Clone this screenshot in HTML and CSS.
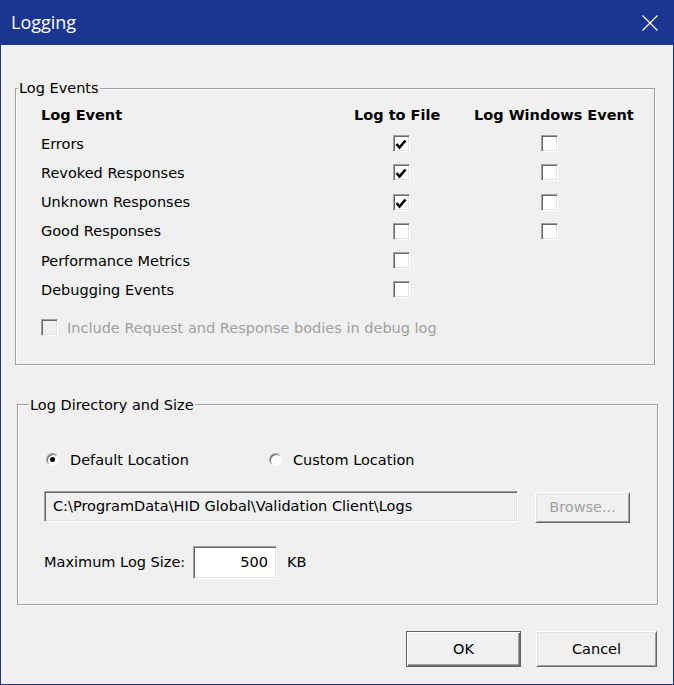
FILE: index.html
```html
<!DOCTYPE html>
<html>
<head>
    <title>Logging</title>
    <link rel="stylesheet" href="styles.css">
</head>
<body>
    <div class="window">
        <div class="titlebar">
            <span class="title">Logging</span>
            <svg class="close" width="16" height="16" viewBox="0 0 16 16">
                <path d="M0.5 0.5 L15.5 15.5 M15.5 0.5 L0.5 15.5" stroke="#fff" stroke-width="1.2" fill="none"/>
            </svg>
        </div>
        <div class="dialog">
            <!-- Log Events group -->
            <fieldset class="group events">
                <legend>Log Events</legend>
                <div class="event-grid">
                    <div class="head">Log Event</div>
                    <div class="head">Log to File</div>
                    <div class="head">Log Windows Event</div>

                    <div>Errors</div>
                    <div class="col-file"><span class="check"><svg width="15" height="15" viewBox="0 0 15 15"><path d="M2.5 7 L5.5 10.5 L11.5 3.5" stroke="#000" stroke-width="2.6" fill="none"/></svg></span></div>
                    <div class="col-win"><span class="check"></span></div>

                    <div>Revoked Responses</div>
                    <div class="col-file"><span class="check"><svg width="15" height="15" viewBox="0 0 15 15"><path d="M2.5 7 L5.5 10.5 L11.5 3.5" stroke="#000" stroke-width="2.6" fill="none"/></svg></span></div>
                    <div class="col-win"><span class="check"></span></div>

                    <div>Unknown Responses</div>
                    <div class="col-file"><span class="check"><svg width="15" height="15" viewBox="0 0 15 15"><path d="M2.5 7 L5.5 10.5 L11.5 3.5" stroke="#000" stroke-width="2.6" fill="none"/></svg></span></div>
                    <div class="col-win"><span class="check"></span></div>

                    <div>Good Responses</div>
                    <div class="col-file"><span class="check"></span></div>
                    <div class="col-win"><span class="check"></span></div>

                    <div>Performance Metrics</div>
                    <div class="col-file"><span class="check"></span></div>
                    <div></div>

                    <div>Debugging Events</div>
                    <div class="col-file"><span class="check"></span></div>
                    <div></div>
                </div>
                <div class="debug-row">
                    <span class="check disabled"></span>
                    <span class="muted">Include Request and Response bodies in debug log</span>
                </div>
            </fieldset>

            <!-- Log Directory group -->
            <fieldset class="group directory">
                <legend>Log Directory and Size</legend>
                <div class="radio-row">
                    <div class="radio-item default"><span class="radio on"></span>Default Location</div>
                    <div class="radio-item"><span class="radio"></span>Custom Location</div>
                </div>
                <div class="path-row">
                    <div class="path-field">C:\ProgramData\HID Global\Validation Client\Logs</div>
                    <div class="btn browse">Browse...</div>
                </div>
                <div class="size-row">
                    <span class="size-label">Maximum Log Size:</span>
                    <div class="size-field">500</div>
                    <span class="unit">KB</span>
                </div>
            </fieldset>

            <div class="buttons">
                <div class="btn ok">OK</div>
                <div class="btn cancel">Cancel</div>
            </div>
        </div>
    </div>
</body>
</html>
```

FILE: styles.css
```css
body {
    margin: 0;
    background-color: #f0f0f0;
    font-family: "DejaVu Sans", sans-serif;
    font-size: 14.5px;
    color: #000;
}
.window {
    width: 674px;
    height: 685px;
}
.titlebar {
    height: 45px;
    background-color: #1b3691;
    display: flex;
    align-items: center;
    padding: 0 16px 0 11px;
    box-sizing: border-box;
}
.title {
    flex: 1;
    color: #fff;
    font-family: "Open Sans", sans-serif;
    font-size: 18px;
    margin-top: -1px;
}
.close {
    display: block;
}
.dialog {
    height: 640px;
    border: 1px solid #1b3691;
    border-top: none;
    box-sizing: border-box;
    overflow: hidden;
}
.group {
    margin: 0;
    padding: 0;
    border: 1px solid #a0a0a0;
    box-shadow: inset 1px 1px #fff, 1px 1px #fff;
    min-inline-size: 0;
}
.group legend {
    line-height: 18px;
    padding: 0 1px;
    background-color: #f0f0f0;
}
.events {
    margin: 34px 18px 0 14px;
    padding: 3px 0 21px 25px;
}
.events legend {
    margin-left: -23px;
}
.event-grid {
    display: grid;
    grid-template-columns: 313px 120px 1fr;
    grid-auto-rows: 29.2px;
    align-items: center;
}
.head {
    font-weight: bold;
}
.col-file .check {
    margin-left: 39px;
}
.col-win .check {
    margin-left: 67px;
}
.check {
    display: block;
    width: 17px;
    height: 17px;
    box-sizing: border-box;
    background-color: #fff;
    border: 1px solid;
    border-color: #a0a0a0 #fff #fff #a0a0a0;
    box-shadow: inset 1px 1px #696969, inset -1px -1px #e3e3e3;
}
.check svg {
    display: block;
    margin: 1px 0 0 0;
}
.check.disabled {
    background-color: #f0f0f0;
}
.debug-row {
    display: flex;
    align-items: center;
    height: 29.2px;
    margin-top: 9px;
}
.muted {
    color: #a0a0a0;
    margin-left: 9px;
}
.directory {
    margin: 31px 15px 0 16px;
    padding: 36px 0 25px 26px;
}
.directory legend {
    margin-left: -15px;
}
.radio-row {
    display: flex;
    align-items: center;
    height: 20px;
    margin-left: 2px;
}
.radio-item {
    display: flex;
    align-items: center;
}
.radio-item.default {
    width: 223px;
}
.radio {
    width: 13px;
    height: 13px;
    box-sizing: border-box;
    border-radius: 50%;
    background-color: #fff;
    border: 1px solid;
    border-color: #a0a0a0 #fff #fff #a0a0a0;
    box-shadow: inset 1px 1px #696969;
    margin-right: 11px;
    display: flex;
    align-items: center;
    justify-content: center;
}
.radio.on::after {
    content: "";
    width: 5px;
    height: 5px;
    border-radius: 50%;
    background-color: #000;
}
.path-row {
    display: flex;
    margin-top: 21px;
}
.path-field {
    width: 474px;
    height: 31px;
    box-sizing: border-box;
    padding-left: 8px;
    line-height: 29px;
    border: 1px solid;
    border-color: #a0a0a0 #fff #fff #a0a0a0;
    box-shadow: inset 1px 1px #696969, inset -1px -1px #e3e3e3;
    white-space: nowrap;
}
.btn {
    box-sizing: border-box;
    text-align: center;
    background-color: #f0f0f0;
    border: 1px solid;
    border-color: #fff #696969 #696969 #fff;
    box-shadow: inset 1px 1px #e3e3e3, inset -1px -1px #a0a0a0;
}
.browse {
    width: 95px;
    height: 31px;
    line-height: 29px;
    margin: 1px 0 0 17px;
    color: #a0a0a0;
}
.size-row {
    display: flex;
    align-items: center;
    margin-top: 23px;
}
.size-label {
    width: 149px;
}
.size-field {
    width: 84px;
    height: 33px;
    box-sizing: border-box;
    line-height: 30px;
    text-align: right;
    padding-right: 8px;
    background-color: #fff;
    border: 1px solid;
    border-color: #a0a0a0 #fff #fff #a0a0a0;
    box-shadow: inset 1px 1px #696969, inset -1px -1px #e3e3e3;
}
.unit {
    margin-left: 10px;
}
.buttons {
    display: flex;
    justify-content: flex-end;
    gap: 15px;
    margin: 26px 16px 0 0;
}
.buttons .btn {
    height: 36px;
    line-height: 34px;
}
.ok {
    width: 115px;
    border-color: #646464;
    box-shadow: inset 1px 1px #fff, inset -1px -1px #696969, inset -2px -2px #a0a0a0;
}
.cancel {
    width: 121px;
}
```
